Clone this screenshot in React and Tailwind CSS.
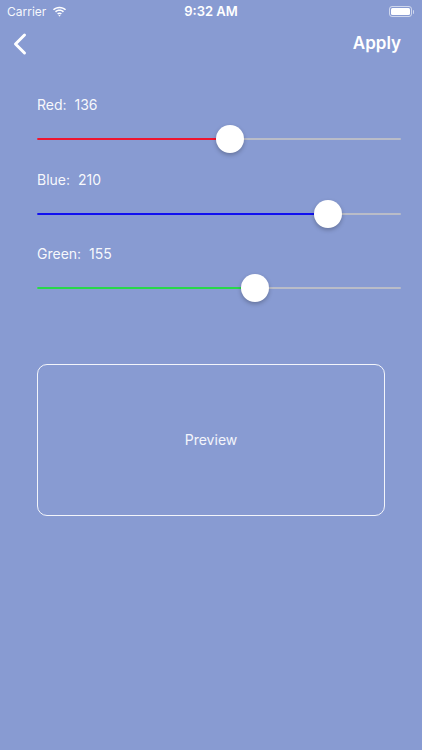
import React from 'react';

const font = { fontFamily: 'Inter, "Liberation Sans", sans-serif' };

// thumb travels from track start + 14 to track end - 14
function ColorSlider({ label, value, fillClass }) {
  const pct = value / 255;
  const left = `calc(14px + (100% - 28px) * ${pct})`;
  return (
    <div className="flex flex-col">
      <div className="h-[17px] leading-[17px] text-[14px] text-white/95 whitespace-pre">
        {label}:  {value}
      </div>
      <div className="relative mt-[12px] h-[28px]">
        <div className="absolute left-0 right-0 top-[13px] h-[2px] rounded-full bg-[#b9bcc8]" />
        <div className={`absolute left-0 top-[13px] h-[2px] rounded-full ${fillClass}`} style={{ width: left }} />
        <div
          className="absolute top-0 h-[28px] w-[28px] -translate-x-1/2 rounded-full bg-white shadow-[0_2px_4px_rgba(0,0,0,0.25)]"
          style={{ left }}
        />
      </div>
    </div>
  );
}

export default function App() {
  return (
    <div className="h-[750px] w-[422px] bg-[#889bd2] text-white" style={font}>
      {/* status bar */}
      <div className="flex h-[22px] items-center justify-between px-[7px] pt-[1px]">
        <div className="flex w-[120px] items-center gap-[6px]">
          <span className="text-[12px] text-white/95">Carrier</span>
          <svg width="15" height="11" viewBox="0 0 15 11" fill="white">
            <path d="M7.5 2.2c2.1 0 4 .8 5.5 2.1l1.1-1.1C12.3 1.6 10 .7 7.5.7S2.7 1.6.9 3.2L2 4.3c1.5-1.3 3.4-2.1 5.5-2.1z" />
            <path d="M7.5 5.1c1.3 0 2.5.5 3.4 1.3l1.1-1.1C10.8 4.2 9.2 3.6 7.5 3.6S4.2 4.2 3 5.3l1.1 1.1c.9-.8 2.1-1.3 3.4-1.3z" />
            <path d="M7.5 8c.5 0 1 .2 1.3.5l1.1-1.1C9.3 6.8 8.4 6.5 7.5 6.5s-1.8.3-2.4.9l1.1 1.1c.3-.3.8-.5 1.3-.5zM7.5 10.6l1.2-1.2c-.3-.3-.7-.5-1.2-.5s-.9.2-1.2.5l1.2 1.2z" />
          </svg>
        </div>
        <span className="text-[13px] font-semibold">9:32 AM</span>
        <div className="flex w-[120px] items-center justify-end pr-[1px]">
          <div className="flex h-[11px] w-[23px] items-center rounded-[3px] border border-white/60 p-[1px]">
            <div className="h-full w-full rounded-[1.5px] bg-white" />
          </div>
          <div className="ml-[1px] h-[4px] w-[1.5px] rounded-r bg-white/60" />
        </div>
      </div>

      {/* nav bar */}
      <div className="flex h-[44px] items-center justify-between pl-[12px] pr-[21px]">
        <svg width="16" height="24" viewBox="0 0 16 24" fill="none">
          <path d="M12.5 3 L3.5 12 L12.5 21" stroke="white" strokeWidth="3" strokeLinecap="round" strokeLinejoin="round" />
        </svg>
        <span className="text-[17px] font-semibold">Apply</span>
      </div>

      {/* sliders */}
      <div className="flex flex-col gap-[17.5px] pl-[37px] pr-[21px] pt-[30px]">
        <ColorSlider label="Red" value={136} fillClass="bg-[#ee1530]" />
        <ColorSlider label="Blue" value={210} fillClass="bg-[#1010f0]" />
        <ColorSlider label="Green" value={155} fillClass="bg-[#28d84a]" />
      </div>

      {/* preview */}
      <div className="ml-[37px] mt-[61.5px] flex h-[152px] w-[348px] items-center justify-center rounded-[10px] border border-white/90">
        <span className="text-[14px] text-white/90">Preview</span>
      </div>
    </div>
  );
}
